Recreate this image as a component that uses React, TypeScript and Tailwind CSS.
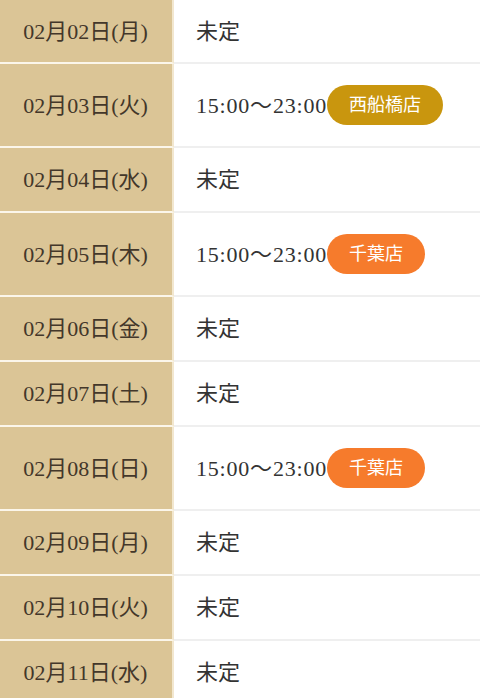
import React from "react";

type Row = { date: string; time?: string; shop?: string; color?: "gold" | "orange" };

const rows: Row[] = [
  { date: "02月02日(月)" },
  { date: "02月03日(火)", time: "15:00～23:00", shop: "西船橋店", color: "gold" },
  { date: "02月04日(水)" },
  { date: "02月05日(木)", time: "15:00～23:00", shop: "千葉店", color: "orange" },
  { date: "02月06日(金)" },
  { date: "02月07日(土)" },
  { date: "02月08日(日)", time: "15:00～23:00", shop: "千葉店", color: "orange" },
  { date: "02月09日(月)" },
  { date: "02月10日(火)" },
  { date: "02月11日(水)" },
];

export default function App() {
  return (
    <div
      className="w-[480px] h-[698px] overflow-hidden bg-white"
      style={{ fontFamily: '"Liberation Serif", "Noto Sans CJK JP", serif' }}
    >
      {rows.map((r, i) => {
        const tall = !!r.shop;
        const h = i === 0 ? "h-[64px]" : tall ? "h-[84px]" : "h-[65px]";
        return (
          <div key={i} className={`flex ${h}`}>
            <div className="w-[174px] shrink-0 bg-[#dbc596] flex items-center justify-center pr-[1px] text-[22px] text-[#43372a] border-r-[2px] border-r-[#f2e7cf] border-b-2 border-b-[#fbf6ea]">
              {r.date}
            </div>
            <div className="flex-1 flex items-center pl-[22px] text-[22px] text-[#333333] border-b-2 border-b-[#efefef]">
              {r.shop ? (
                <>
                  <span className="tracking-[0.8px]">{r.time}</span>
                  <span
                    className={`h-[40px] px-[22px] rounded-full flex items-center text-[18px] text-white ${
                      r.color === "gold" ? "bg-[#c9960e]" : "bg-[#f67b2c]"
                    }`}
                  >
                    {r.shop}
                  </span>
                </>
              ) : (
                <span>未定</span>
              )}
            </div>
          </div>
        );
      })}
    </div>
  );
}
